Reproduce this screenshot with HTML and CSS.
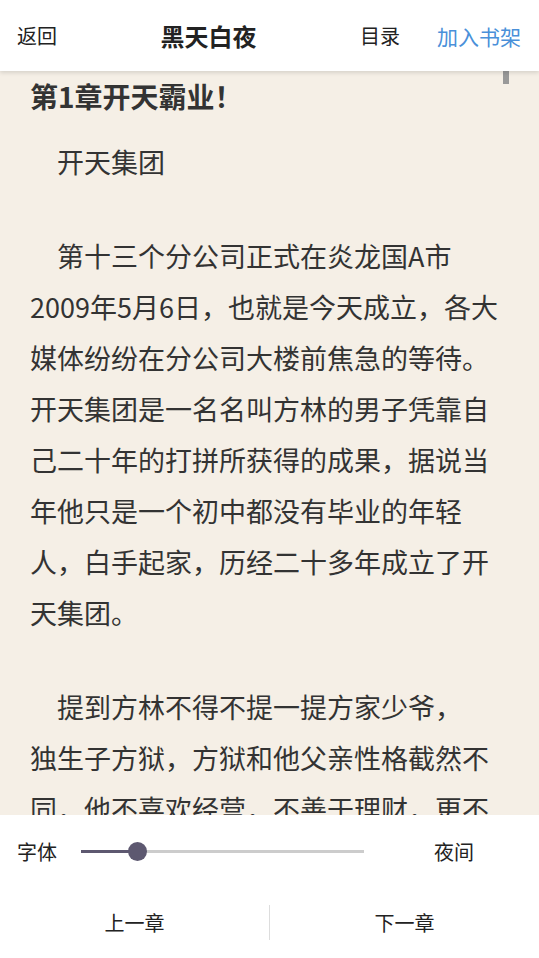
FILE: index.html
```html
<!DOCTYPE html>
<html lang="zh-CN">

<head>
    <meta charset="UTF-8" />
    <meta name="viewport" content="width=device-width, initial-scale=1.0" />
    <title>黑天白夜</title>
    <link rel="stylesheet" href="styles.css">
</head>

<body>
    <header class="top-bar">
        <span class="top-link">返回</span>
        <span class="book-title">黑天白夜</span>
        <span class="top-link">目录</span>
        <span class="top-link add-shelf">加入书架</span>
    </header>

    <main class="reader">
        <div class="scroll-thumb"></div>
        <h1 class="chapter-title">第1章开天霸业！</h1>
        <p class="para">开天集团</p>
        <p class="para">第十三个分公司正式在炎龙国A市2009年5月6日，也就是今天成立，各大媒体纷纷在分公司大楼前焦急的等待。开天集团是一名名叫方林的男子凭靠自己二十年的打拼所获得的成果，据说当年他只是一个初中都没有毕业的年轻人，白手起家，历经二十多年成立了开天集团。</p>
        <p class="para">提到方林不得不提一提方家少爷，<br>独生子方狱，方狱和他父亲性格截然不同，他不喜欢经营，不善于理财，更不</p>
    </main>

    <footer class="bottom-panel">
        <div class="setting-row">
            <span class="setting-label">字体</span>
            <div class="slider">
                <div class="slider-fill"></div>
                <div class="slider-knob"></div>
            </div>
            <span class="setting-label night">夜间</span>
        </div>
        <div class="chapter-nav">
            <span class="nav-btn">上一章</span>
            <span class="nav-divider"></span>
            <span class="nav-btn">下一章</span>
        </div>
    </footer>
</body>

</html>
```

FILE: styles.css
```css
html,
body {
    height: 100%;
}

body {
    margin: 0;
    background: #f5efe6;
    color: #333;
    font-family: "Noto Sans CJK SC", "Noto Sans", sans-serif;
    display: flex;
    flex-direction: column;
    overflow: hidden;
}

.top-bar {
    height: 71px;
    flex: none;
    display: flex;
    align-items: center;
    padding: 0 18px 0 17px;
    background: #fff;
    box-shadow: 0 2px 4px rgba(0, 0, 0, 0.12);
    position: relative;
    z-index: 2;
}

.top-link {
    font-size: 20px;
    color: #222;
}

.book-title {
    flex: 1;
    text-align: center;
    font-size: 24px;
    font-weight: bold;
    color: #222;
}

.add-shelf {
    margin-left: 37px;
    color: #4a90d9;
    font-size: 21px;
}

.reader {
    flex: 1;
    overflow: hidden;
    padding: 5px 34px 0 30px;
    position: relative;
}

.scroll-thumb {
    position: absolute;
    top: 0;
    left: 503px;
    width: 6px;
    height: 13px;
    background: #999;
}

.chapter-title {
    margin: 0 0 20px;
    font-size: 28px;
    line-height: 40px;
    font-weight: bold;
    color: #333;
}

.para {
    margin: 0 0 43px;
    font-size: 27px;
    line-height: 51px;
    text-indent: 27px;
}

.bottom-panel {
    flex: none;
    height: 143px;
    background: #fff;
    display: flex;
    flex-direction: column;
}

.setting-row {
    height: 72px;
    display: flex;
    align-items: center;
    padding-left: 17px;
}

.setting-label {
    font-size: 20px;
    color: #222;
}

.slider {
    width: 283px;
    height: 3px;
    margin-left: 24px;
    background: #ccc;
    position: relative;
}

.slider-fill {
    width: 57px;
    height: 100%;
    background: #5d5870;
}

.slider-knob {
    position: absolute;
    left: 47px;
    top: -8px;
    width: 19px;
    height: 19px;
    border-radius: 50%;
    background: #5d5870;
}

.night {
    margin-left: 70px;
}

.chapter-nav {
    flex: 1;
    display: flex;
    align-items: center;
}

.nav-btn {
    flex: 1;
    text-align: center;
    font-size: 20px;
    color: #222;
}

.nav-divider {
    width: 1px;
    height: 35px;
    background: #ddd;
}
```
